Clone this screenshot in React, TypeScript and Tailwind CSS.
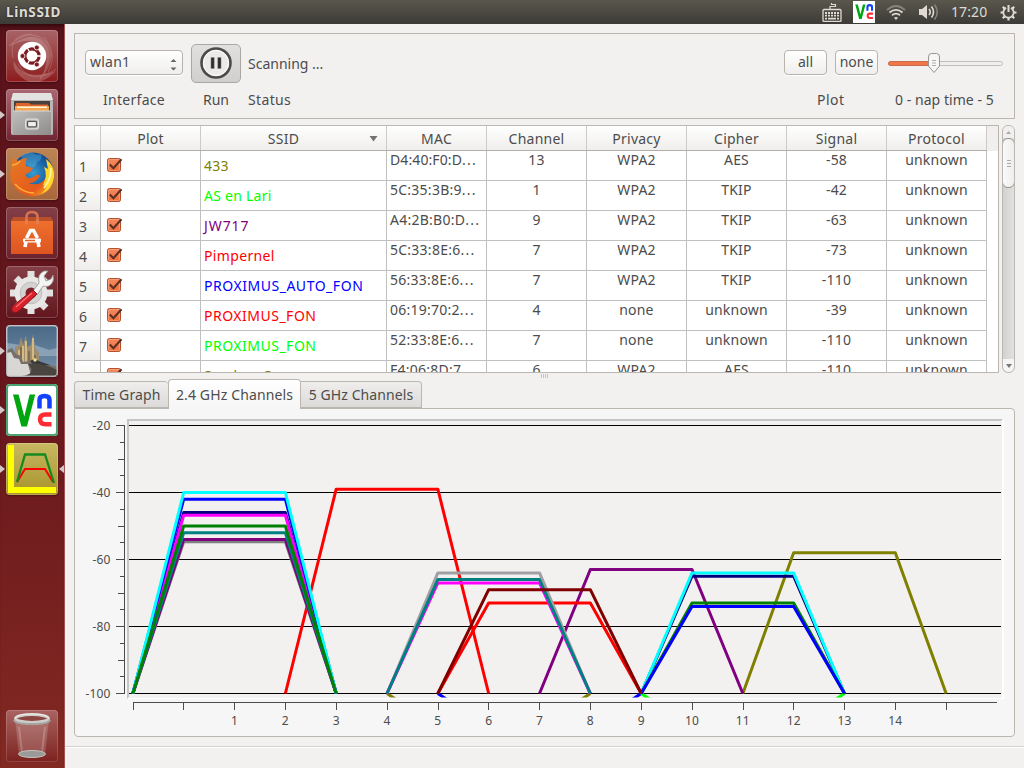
import React from "react";

type Row = [string, string, string, string, string, string, string, string];

const rows: Row[] = [
  ["433", "text-[#808000] tracking-[0.3px]", "D4:40:F0:D…", "13", "WPA2", "AES", "-58", "tracking-[0.1px]"],
  ["AS en Lari", "text-[#00ff00] tracking-[0.25px]", "5C:35:3B:9…", "1", "WPA2", "TKIP", "-42", "tracking-[0.25px]"],
  ["JW717", "text-[#800080] tracking-[0.9px]", "A4:2B:B0:D…", "9", "WPA2", "TKIP", "-63", "tracking-[0.25px]"],
  ["Pimpernel", "text-[#ff0000] tracking-[0.35px]", "5C:33:8E:6…", "7", "WPA2", "TKIP", "-73", "tracking-[0.25px]"],
  ["PROXIMUS_AUTO_FON", "text-[#0000ff] tracking-[0.53px]", "56:33:8E:6…", "7", "WPA2", "TKIP", "-110", "tracking-[0.25px]"],
  ["PROXIMUS_FON", "text-[#ff0000] tracking-[0.5px]", "06:19:70:2…", "4", "none", "unknown", "-39", "tracking-[0.25px]"],
  ["PROXIMUS_FON", "text-[#00ff00] tracking-[0.5px]", "52:33:8E:6…", "7", "none", "unknown", "-110", "tracking-[0.25px]"],
  ["Sanders Go", "text-[#808000] tracking-[0.1px]", "F4:06:8D:7…", "6", "WPA2", "AES", "-110", "tracking-[0.25px]"],
];

const gridCols = "grid grid-cols-[26px_100px_186px_100px_100px_100px_100px_100px_100px]";

function CheckBox() {
  return (
    <svg width="17" height="17" viewBox="0 0 17 17">
      <defs>
        <linearGradient id="cb" x1="0" y1="0" x2="0" y2="1">
          <stop offset="0" stopColor="#f58a61" />
          <stop offset="1" stopColor="#ef6f3c" />
        </linearGradient>
      </defs>
      <rect x="1.5" y="1.5" width="13" height="13" rx="1.8" fill="url(#cb)" stroke="#b5512c" />
      <rect x="2.5" y="2.5" width="11" height="11" rx="1" fill="none" stroke="#fbb090" strokeOpacity=".6" />
      <path d="M3.8 7.6L7.4 11.200L15.500 2.200" fill="none" stroke="#5b3023" strokeWidth="2.100" />
    </svg>
  );
}

function VncMark() {
  return (
    <>
      <path d="M7 10.5h5.6l5.7 22 5.3-22h5.6L21 42.5h-5.6Z" fill="#00a510" />
      <path d="M33.5 24.500V16q0-4 5-4t5 4v8.500" fill="none" stroke="#1140ff" strokeWidth="4.500" />
      <path d="M45.500 30.500h-6q-5.500 0-5.500 4.800t5.500 4.900h6" fill="none" stroke="#ff2c34" strokeWidth="4.500" />
    </>
  );
}

function TopBar() {
  return (
    <header className="flex h-6 shrink-0 items-center bg-gradient-to-b from-[#5a574c] to-[#3c3b37] pl-[6px] pr-[7px] text-[#dfdbd2]">
      <span className="text-[13.5px] font-bold tracking-[0.65px] [text-shadow:0_0_2px_#222]">LinSSID</span>
      <div className="ml-auto flex items-center">
        <svg width="20" height="20" viewBox="0 0 20 20" fill="none" stroke="#dfdbd2">
          <path d="M8 7V4.500H13.500V2.500H9.500V1" strokeWidth="1.200" />
          <rect x="1" y="7.500" width="18" height="12" rx="1" strokeWidth="1.300" />
          <path d="M3 11h14M3 13.700h14" strokeWidth="1.800" strokeDasharray="2 1" />
          <path d="M3 16.700h2M6 16.700h8M15 16.700h2" strokeWidth="1.800" />
        </svg>
        <svg className="ml-[11px]" width="22" height="22" viewBox="2 3 48 48">
          <rect x="2" y="3" width="48" height="48" fill="#fff" />
          <VncMark />
        </svg>
        <svg className="ml-[11px]" width="20" height="18" viewBox="0 0 20 18" fill="none" strokeWidth="1.800">
          <path d="M1 7Q10-1 19 7" stroke="#85827a" />
          <path d="M3.500 9.500Q10 4.200 16.500 9.500" stroke="#dfdbd2" />
          <path d="M6 12.200Q10 9.200 14 12.200" stroke="#dfdbd2" />
          <path d="M8 14.800Q10 13 12 14.800L10 17Z" fill="#dfdbd2" stroke="none" />
        </svg>
        <svg className="ml-[12px]" width="21" height="18" viewBox="0 0 21 18" fill="none" strokeWidth="1.600">
          <path d="M1 6H4L9 2V16L4 12H1Z" fill="#dfdbd2" />
          <path d="M11 6Q13.500 9 11 12M13.500 3.500Q17.500 9 13.500 14.500" stroke="#dfdbd2" />
          <path d="M16.500 1.500Q22 9 16.500 16.500" stroke="#85827a" />
        </svg>
        <span className="ml-[12px] w-[37px] text-[14px] tracking-[0.100px]">17:20</span>
        <svg className="ml-[12px]" width="17" height="17" viewBox="0 0 17 17" fill="none" stroke="#dfdbd2">
          <path d="M6 3.900A5.200 5.200 0 1 0 11 3.900" strokeWidth="1.800" />
          <path d="M8.500 1V8" strokeWidth="2" />
          <path d="M.5 8.500H3M14 8.500H16.500M2.800 2.800L4.600 4.600M14.200 2.800L12.400 4.600M2.800 14.200L4.600 12.400M14.200 14.200L12.400 12.400M8.500 14V16.500" strokeWidth="2.200" />
        </svg>
      </div>
    </header>
  );
}

function UbuntuIcon() {
  return (
    <>
      <path d="M3 16Q24-4 40 12Q52 28 34 49M7 28Q2 4 26 4M50 39Q24 56 12 34M38 7Q52 25 42 42" stroke="#fff" strokeOpacity=".16" strokeWidth="1.200" fill="none" />
      <path d="M4 16Q30-3 42 17Q48 30 35 48Q44 30 38 19Q27 4 4 16M8 31Q17 52 50 41Q29 62 13 45Q6 39 8 31" fill="#fff" fillOpacity=".2" />
      <circle cx="26" cy="26" r="14.200" fill="#fff" />
      <circle cx="26" cy="26" r="7.100" fill="none" stroke="#7d1b1f" strokeWidth="3.200" />
      <path d="M26 26L36 26M26 26L20.500 16.500M26 26L20.500 35.500" stroke="#fff" strokeWidth="1.300" />
      <circle cx="26" cy="26" r="5.100" fill="#fff" />
      <g fill="#7d1b1f" stroke="#fff" strokeWidth=".8">
        <circle cx="16.500" cy="26" r="2.500" />
        <circle cx="30.800" cy="17.500" r="2.500" />
        <circle cx="30.800" cy="34.500" r="2.500" />
      </g>
    </>
  );
}

function FilesIcon() {
  return (
    <>
      <path d="M7 4H45L47 13V45Q47 46 45 46H7Q5 46 5 44V13Z" fill="#b9b7b5" />
      <path d="M7 4H45L47 11H5Z" fill="#e2e2e0" />
      <path d="M8 12H44V23H8Z" fill="#49413b" />
      <path d="M10 14H23L25 15.500H42V22H9Z" fill="#dd652c" />
      <path d="M9 17H43V23H9Z" fill="#f5a450" />
      <path d="M11 18.300H41" stroke="#fff4d8" strokeWidth="1.500" />
      <path d="M7 22H45V46H7Z" fill="url(#steel)" />
      <path d="M7 22H45" stroke="#d9d8d7" />
      <rect x="19.500" y="30" width="13" height="10" rx="1.500" fill="#c4c3c2" stroke="#e1e1e1" />
      <rect x="21.500" y="32.300" width="9" height="5.500" rx="1" fill="#eee" stroke="#555" strokeWidth="1.300" />
    </>
  );
}

function FirefoxIcon() {
  return (
    <>
      <circle cx="27" cy="25" r="20.500" fill="url(#globe)" />
      <path d="M15 8Q20 3 27 5Q32 8 35 6Q37 12 31 14Q30 21 24 19Q18 16 15 8" fill="#66c3e7" fillOpacity=".35" />
      <path d="M7 9Q10 12 12 13Q16 10 21 10Q19 14 20 18L27 20Q25 24 20 26Q19 28 22 30Q26 31 30 27Q33 26 34 28Q29 36 22 35Q33 39 39 31Q43 25 42 17Q47 23 48 28Q47 43 34 47Q20 51 10 41Q2 32 5 20Z" fill="url(#fox)" />
      <path d="M40 11Q49 18 48 29Q46 42 35 46Q42 40 42 32Q40 38 37 37Q42 27 38 19L42 21Z" fill="#ffd72b" />
      <path d="M45 20Q45 32 38 40" fill="none" stroke="#fff39b" strokeWidth="2" />
      <path d="M6 17Q11 17 14 13M9 36Q17 45 28 45" fill="none" stroke="#ffaf35" strokeWidth="1.300" />
    </>
  );
}

function SoftwareIcon() {
  return (
    <>
      <path d="M5 14L7 10H45L47 14Z" fill="#b9502a" />
      <path d="M20.500 17V10Q20.500 5 26 5T31.500 10V17" fill="none" stroke="#d57350" strokeWidth="2.600" />
      <path d="M5 14H47V47H5Z" fill="url(#bag)" />
      <path d="M20.500 17V13M31.500 17V13" stroke="#e47c4d" strokeWidth="3" />
      <path d="M20.500 31L24.500 23.500H27.500L31.500 31M20 35L19 40M32 35L33 40" fill="none" stroke="#fff" strokeWidth="3.600" />
      <rect x="17" y="31.500" width="18" height="4" rx="1" fill="#fff" />
      <path d="M19 33.500H29" stroke="#e46125" strokeWidth="1.400" />
    </>
  );
}

function SettingsIcon() {
  return (
    <>
      <g stroke="#e2e1e0" strokeWidth="7">
        <path d="M25 5V48M4 27H47M10 12L40 42M10 42L40 12" />
      </g>
      <circle cx="25" cy="27" r="16.500" fill="#e8e7e6" />
      <circle cx="25" cy="27" r="10.800" fill="#d5d3d2" stroke="#bfbdbc" />
      <circle cx="25" cy="27" r="5.500" fill="#7b2329" />
      <path d="M27 25L33 17Q31 8 38 5L42 5L38 10L40 15L45 13L47 9Q49 16 43 20Q40 21 37 20L31 29Z" fill="#f4f4f3" stroke="#949190" strokeWidth=".8" />
      <path d="M27 24L31 28L14 44Q10 48 7 46Q4 43 8 39Z" fill="#d81f2a" stroke="#871721" />
      <path d="M26 27L10 41" stroke="#fa7272" strokeWidth="1.300" />
    </>
  );
}

function PhotoIcon() {
  return (
    <>
      <rect x="1" y="1" width="50" height="50" rx="2" fill="url(#sky)" />
      <defs><filter id="haze" x="-10%" y="-10%" width="120%" height="120%"><feGaussianBlur stdDeviation=".7" /></filter></defs>
      <g filter="url(#haze)">
        <path d="M1 18L15 20V32H1Z M29 20L43 25L51 23V31H28Z" fill="#9bafc1" fillOpacity=".7" />
        <path d="M9 38V22L13 20L15 12L17 20L20 10L21 22L25 20L27 9L29 22L33 28V40Z" fill="#9f8d72" />
        <path d="M13 25V38M17 21V37M20 16V37M27 13V35" stroke="#e7ca88" strokeWidth="1.500" />
        <path d="M15 22L15 34M23 26V37M29 30V37" stroke="#725a40" strokeWidth="1.200" />
        <path d="M1 25L6 23L10 29L15 31L17 37L31 35L42 39L51 42V51H1Z" fill="#77706a" />
        <path d="M1 28L5 27L8 33L13 34L15 39L22 39L25 51H1Z" fill="#d8d7d4" />
        <path d="M24 36L28 34L35 37L44 40L29 41Z" fill="#35383c" />
        <path d="M22 39Q36 37 51 45V51H16Q31 49 22 39" fill="#4b4541" />
        <circle cx="29" cy="35" r="1.700" fill="#ffdf87" />
      </g>
      <rect x="1" y="1" width="50" height="50" rx="3" fill="none" stroke="#c8c8c8" strokeOpacity=".8" />
    </>
  );
}

function LinssidIcon() {
  return (
    <>
      <path d="M2 2H8V44H50V50H2Z" fill="#ffff00" />
      <path d="M11 39L19 26H39L47 39" fill="none" stroke="#f00" strokeWidth="2" />
      <path d="M11 39L19 11.500H39L48 40" fill="none" stroke="#168a20" strokeWidth="2.300" />
    </>
  );
}

function TrashIcon() {
  return (
    <>
      <path d="M9 9L13 45Q26 51 39 45L43 9Z" fill="#fff" fillOpacity=".17" />
      <path d="M13 17L16 42M39 17L36 42" stroke="#fff" strokeOpacity=".2" strokeWidth="2" />
      <ellipse cx="26" cy="44" rx="13.500" ry="3.500" fill="#9a9a98" stroke="#c5c4c2" />
      <ellipse cx="26" cy="8.500" rx="16.500" ry="4" fill="#8b4542" stroke="#cfcdca" strokeWidth="3" />
      <path d="M8 10Q9 14 26 14T44 10" fill="none" stroke="#a7a5a2" strokeWidth="2" />
      <path d="M9 8Q12 4 26 4T43 8" fill="none" stroke="#f3f2ef" strokeWidth="1" />
    </>
  );
}

const launchers = [
  { Icon: UbuntuIcon, tile: "from-[#a76367] to-[#8c181c]", open: false },
  { Icon: FilesIcon, tile: "from-[#a96772] to-[#702432]", open: true },
  { Icon: FirefoxIcon, tile: "from-[#bd8456] to-[#a9673c]", open: true },
  { Icon: SoftwareIcon, tile: "from-[#823f47] to-[#6c222c]", open: false },
  { Icon: SettingsIcon, tile: "from-[#853f47] to-[#62151d]", open: false },
  { Icon: PhotoIcon, tile: "from-[#a7b0bb] to-[#8d9197]", open: true },
  { Icon: VncMark, tile: "from-white to-white", open: true },
  { Icon: LinssidIcon, tile: "from-[#c7b861] to-[#a89428]", open: true },
];

function Sidebar() {
  return (
    <aside className="flex w-[65px] shrink-0 flex-col border-r border-[#a25250] bg-gradient-to-b from-[#59121a] via-[#68171d] to-[#832922] pt-[6px] pb-[6px] shadow-[inset_0_5px_4px_-3px_#2e080d]">
      <svg className="absolute" width="0" height="0">
        <defs>
          <linearGradient id="steel" x1="0" y1="0" x2="1" y2="1"><stop stopColor="#bfbebd" /><stop offset="1" stopColor="#8d8c8b" /></linearGradient>
          <linearGradient id="bag" x1="0" y1="0" x2="0" y2="1"><stop stopColor="#ee702d" /><stop offset="1" stopColor="#dd5521" /></linearGradient>
          <linearGradient id="fox" x1="0" y1="0" x2="1" y2="1"><stop stopColor="#e47b25" /><stop offset=".7" stopColor="#e75a1b" /><stop offset="1" stopColor="#ffca2c" /></linearGradient>
          <radialGradient id="globe"><stop stopColor="#389bd0" /><stop offset="1" stopColor="#104b92" /></radialGradient>
          <linearGradient id="sky" x1="0" y1="0" x2="0" y2="1"><stop stopColor="#496986" /><stop offset="1" stopColor="#7893ad" /></linearGradient>
        </defs>
      </svg>
      <div className="flex flex-col gap-[7px]">
        {launchers.map(({ Icon, tile, open }, i) => (
          <div key={i} className="flex h-[52px] items-center">
            <svg width="6" height="12" viewBox="0 0 6 12">{open && <path d="M0 2L5 6L0 10Z" fill="#d2c8c8" />}</svg>
            <div className={`h-[52px] w-[52px] overflow-hidden rounded-[4px] bg-gradient-to-b ${tile} ${i === 6 ? "shadow-[inset_0_0_0_2px_#4aa471]" : "shadow-[inset_0_0_0_1px_#ffffff35,0_1px_2px_#0005]"}`}>
              <svg width="52" height="52" viewBox="0 0 52 52"><Icon /></svg>
            </div>
            <svg width="6" height="12" viewBox="0 0 6 12">{i === 7 && <path d="M6 2L1 6L6 10Z" fill="#d2c8c8" />}</svg>
          </div>
        ))}
      </div>
      <div className="mt-auto ml-[6px] h-[52px] w-[52px] rounded-[4px] bg-gradient-to-b from-[#a96361] to-[#7c211e] shadow-[inset_0_0_0_1px_#ffffff28]">
        <svg width="52" height="52" viewBox="0 0 52 52"><TrashIcon /></svg>
      </div>
    </aside>
  );
}

const button = "flex items-center border border-[#b7b3ae] rounded-[4px] bg-gradient-to-b from-white to-[#efeeec] shadow-[0_1px_0_#fff]";

function Toolbar() {
  return (
    <section className="flex h-[86px] w-[941px] shrink-0 justify-between border border-[#bcb6b1] pl-[10px] pr-[11px]">
      <div className="grid h-full grid-cols-[98px_65px_130px] grid-rows-[59px_24px]">
        <div className="flex items-center pb-[2px]">
          <div className={`${button} h-[25px] w-[98px] justify-between pl-[4px] pr-[5px]`}>
            <span className="pb-px tracking-[0.25px]">wlan1</span>
            <svg className="mt-[3px]" width="7" height="13" viewBox="0 0 7 13" fill="#666"><path d="M.5 4L3.500 1L6.500 4ZM.5 9.500L3.500 12.500L6.500 9.500Z" /></svg>
          </div>
        </div>
        <div className="flex items-center pb-px pl-2">
          <div className="flex h-[39px] w-[50px] items-center justify-center rounded-[5px] border border-[#aaa6a2] bg-gradient-to-b from-[#e2e0de] to-[#d1cfcd]">
            <svg width="34" height="34" viewBox="0 0 34 34">
              <circle cx="17" cy="17" r="14.500" fill="#eceae8" stroke="#4b4b4b" strokeWidth="2.600" />
              <circle cx="17" cy="17" r="12.500" fill="none" stroke="#fff" strokeWidth="1" />
              <path d="M12 11.500H15.200V22.500H12ZM18.800 11.500H22V22.500H18.800Z" fill="#292929" stroke="#888" strokeWidth=".6" />
            </svg>
          </div>
        </div>
        <div className="flex items-center pt-px">Scanning ...</div>
        <div className="pl-[18px] leading-[13px] tracking-[0.28px]">Interface</div>
        <div className="pl-[20px] leading-[13px]">Run</div>
        <div className="leading-[13px] tracking-[0.35px]">Status</div>
      </div>
      <div className="grid grid-cols-[104px_115px] grid-rows-[59px_24px]">
        <div className="flex items-center gap-2 pb-[2px]">
          <div className={`${button} h-[25px] w-[43px] justify-center pb-px`}>all</div>
          <div className={`${button} h-[25px] w-[43px] justify-center pb-px`}>none</div>
        </div>
        <div className="flex items-center pb-px">
          <svg width="115" height="24" viewBox="0 0 115 24">
            <rect x=".5" y="10.500" width="114" height="4" rx="2" fill="#eee" stroke="#c2bebb" />
            <rect x=".5" y="10.500" width="45" height="4" rx="2" fill="#f07746" stroke="#c96d4c" />
            <path d="M43.500 2.500H48.500Q51.500 2.500 51.500 6V15L46 21.500L40.500 15V6Q40.500 2.500 43.500 2.500Z" fill="#f7f6f5" stroke="#98938f" />
            <path d="M44 9.500H48M44 12H48M44 14.500H48" stroke="#b1adab" />
          </svg>
        </div>
        <div className="pl-[33px] leading-[13px] tracking-[0.5px]">Plot</div>
        <div className="pl-[7px] leading-[13px] tracking-[0.05px] whitespace-nowrap">0 - nap time - 5</div>
      </div>
    </section>
  );
}

function NetworkTable() {
  return (
    <section className="mt-[6px] flex h-[248px] shrink-0 gap-[3px]">
      <div className="w-[925px] overflow-hidden border border-[#bcb6b1] bg-white">
        <div className="flex h-[25px] bg-[#f0efed]">
          <div className={`${gridCols} h-[25px] border-b border-[#b2aeab] bg-gradient-to-b from-white to-[#efeeec]`}>
            {["", "Plot", "SSID", "MAC", "Channel", "Privacy", "Cipher", "Signal", "Protocol"].map((name, i) => (
              <div key={i} className="relative flex items-center justify-center border-r border-[#cecac7] pt-px tracking-[0.25px] text-[#4c4c4c]">
                <span className={i === 2 ? "mr-[20px]" : ""}>{name}</span>
                {i === 2 && <svg className="absolute top-[10px] right-[8px]" width="9" height="6" viewBox="0 0 9 6"><path d="M0.500 0H8.500L4.500 5.500Z" fill="#737373" /></svg>}
              </div>
            ))}
          </div>
        </div>
        {rows.map(([ssid, style, mac, channel, privacy, cipher, signal, macStyle], r) => (
          <div key={r} className={`${gridCols} h-[30px] w-[912px]`}>
            <div className="flex items-center border-r border-b border-[#b9b5b2] bg-gradient-to-b from-white to-[#eeedeb] pt-[2px] pl-[4px]">{r < 7 ? r + 1 : ""}</div>
            <div className="border-r border-b border-[#c0c0c0] pt-[6px] pl-[5px]"><CheckBox /></div>
            <div className={`flex items-center border-r border-b border-[#c0c0c0] pl-[3px] whitespace-nowrap ${style}`}>{ssid}</div>
            <div className={`border-r border-b border-[#c0c0c0] pl-[3px] leading-[17px] whitespace-nowrap ${macStyle}`}>{mac.slice(0, -1)}<span className="tracking-[1.3px]">...</span></div>
            {[channel, privacy, cipher, signal, "unknown"].map((value, i) => (
              <div key={i} className="border-r border-b border-[#c0c0c0] text-center leading-[17px] tracking-[0.2px]">{value}</div>
            ))}
          </div>
        ))}
      </div>
      <div className="flex w-[13px] flex-col overflow-hidden rounded-[6px] border border-[#bbb7b3] bg-gradient-to-r from-[#d2d1cf] to-[#e2e1df]">
        <div className="flex h-[12px] items-center justify-center bg-[#f1f0ef]"><svg width="5" height="3" viewBox="0 0 5 3"><path d="M0 3L2.500 0L5 3Z" fill="#aaa" /></svg></div>
        <div className="-mx-px flex h-[50px] flex-col items-center justify-center gap-[2px] rounded-[6px] border border-[#96928e] bg-gradient-to-r from-[#fafafa] to-[#eeeeec]">
          <i className="h-px w-1 bg-[#aaa]" /><i className="h-px w-1 bg-[#aaa]" /><i className="h-px w-1 bg-[#aaa]" />
        </div>
        <div className="mt-auto flex h-[13px] items-center justify-center rounded-b-[6px] bg-[#f5f5f4]"><svg width="6" height="4" viewBox="0 0 6 4"><path d="M0 0H6L3 4Z" fill="#777" /></svg></div>
      </div>
    </section>
  );
}

const channelX = (c: number) => 183.7 + c * 50.83;
const signalY = (s: number) => 425.5 - (s + 20) * 3.35;

const curves: [number, number, string][] = [
  [13, -58, "#808000"], [4, -39, "#ff0000"], [9, -63, "#800080"],
  [7, -110, "#0000ff"], [6, -110, "#808000"], [11, -110, "#00ff00"],
  [7, -73, "#ff0000"], [1, -54.7, "#808080"], [1, -54, "#800080"],
  [1, -52, "#008080"], [1, -46, "#000080"], [1, -46.8, "#ff00ff"],
  [6, -64, "#a0a0a4"], [6, -67, "#ff00ff"], [6, -66, "#008080"],
  [11, -65, "#000080"], [11, -64, "#00ffff"], [11, -73, "#008000"], [11, -74, "#0000ff"],
  [7, -69, "#800000"], [1, -42, "#0000ff"], [1, -40, "#00ffff"], [1, -50, "#008000"],
];

function ChannelChart() {
  return (
    <svg className="block" width="939" height="327" viewBox="75 409 939 327">
      <defs><clipPath id="canvas"><rect x="129" y="421" width="873" height="276.500" /></clipPath></defs>
      <rect x="127" y="419" width="877" height="280" fill="#fff" />
      <path d="M127 419H1003L1001 421H129V697L127 699Z" fill="#c5c5c5" />
      <rect x="129" y="421" width="873" height="277" fill="#f2f1f0" />
      <g stroke="#000" shapeRendering="crispEdges">
        {[-20, -40, -60, -80, -100].map((s) => <path key={s} d={`M129 ${signalY(s)}H1001`} />)}
      </g>
      <g clipPath="url(#canvas)" fill="none" strokeWidth="3" strokeLinejoin="round">
        {curves.map(([c, s, color], i) => (
          <polyline key={i} stroke={color} points={`${channelX(c - 2)},${signalY(-100)} ${channelX(c - 1)},${signalY(s)} ${channelX(c + 1)},${signalY(s)} ${channelX(c + 2)},${signalY(-100)}`} />
        ))}
      </g>
      <g stroke="#4c4c4c" shapeRendering="crispEdges">
        <path d="M124.500 425V694M133 702.500H997" />
        {Array.from({ length: 17 }, (_, i) => {
          const y = Math.floor(signalY(-20 - i * 5)) + 0.5;
          return <path key={i} d={`M${i % 4 === 0 ? 116 : i % 2 === 0 ? 118 : 120} ${y}H124`} />;
        })}
        {Array.from({ length: 17 }, (_, i) => <path key={i} d={`M${Math.floor(channelX(i - 1) + 0.2) + 0.5} 703V710`} />)}
      </g>
      <g fill="#4c4c4c" fontSize="12" letterSpacing=".15">
        {[-20, -40, -60, -80, -100].map((s) => <text key={s} x="110.500" y={signalY(s) + 4.5} textAnchor="end">{s}</text>)}
        {Array.from({ length: 14 }, (_, i) => <text key={i} x={channelX(i + 1)} y="725" textAnchor="middle">{i + 1}</text>)}
      </g>
    </svg>
  );
}

function ChartTabs() {
  return (
    <section className="flex flex-col">
      <nav className="relative z-10 -mb-px flex h-[30px] items-end text-[#4c4c4c]">
        <div className="mb-px flex h-[27px] w-[94px] items-center justify-center rounded-t-[4px] border border-r-0 border-[#bcb6b1] bg-gradient-to-b from-[#efeeec] to-[#dddbd9] pt-px tracking-[0.1px] whitespace-nowrap">Time Graph</div>
        <div className="flex h-[30px] w-[133px] items-center justify-center rounded-t-[4px] border border-b-0 border-[#bcb6b1] bg-gradient-to-b from-white to-[#f6f6f6] tracking-[0.13px] whitespace-nowrap">2.4 GHz Channels</div>
        <div className="mb-px flex h-[27px] w-[121px] items-center justify-center rounded-tr-[4px] border border-l-0 border-[#bcb6b1] bg-gradient-to-b from-[#efeeec] to-[#dddbd9] pt-px tracking-[0.1px] whitespace-nowrap">5 GHz Channels</div>
      </nav>
      <div className="h-[329px] w-[941px] rounded-b-[4px] rounded-tr-[4px] border border-[#bcb6b1] bg-[#f6f6f6]"><ChannelChart /></div>
    </section>
  );
}

export default function App() {
  return (
    <div className="flex h-[768px] w-[1024px] flex-col overflow-hidden bg-[#f2f1f0] font-['Noto_Sans',sans-serif] text-[14px] leading-[20px] text-[#4c4c4c]">
      <TopBar />
      <div className="flex h-[744px]">
        <Sidebar />
        <main className="flex w-[959px] flex-col pt-[9px]">
          <div className="flex flex-col pl-[9px]">
            <Toolbar />
            <NetworkTable />
            <div className="flex h-[6px] items-center justify-center gap-px pr-[9px]">
              {[0, 1, 2, 3].map((i) => <i key={i} className="h-1 w-px bg-[#c8c5c2]" />)}
            </div>
            <ChartTabs />
          </div>
          <footer className="mt-auto h-[22px] border-t border-[#d4d1ce] shadow-[inset_0_1px_0_#fff]" />
        </main>
      </div>
    </div>
  );
}
